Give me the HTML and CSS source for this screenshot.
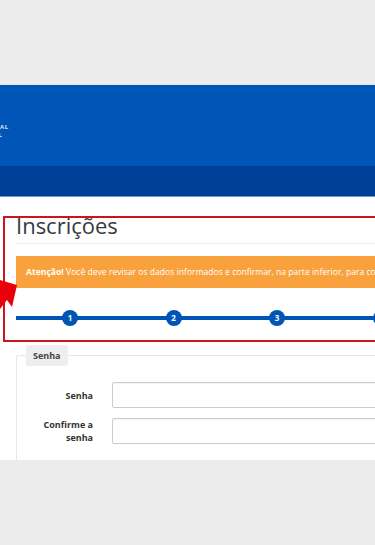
FILE: index.html
```html
<!DOCTYPE html>
<html lang="pt-BR">
<head>
	<meta charset="UTF-8">
	<title>Inscrições</title>
	<link rel="stylesheet" href="styles.css">
</head>
<body>
	<div class="top_gap"></div>
	<div class="masthead">
		<div class="logo">
			<p class="logo_l1">NACIONAL</p>
			<p class="logo_l2">BRASIL</p>
		</div>
	</div>
	<div class="menu"></div>
	<div class="content">
		<h3 class="title">Inscrições</h3>
		<div class="alert"><b>Atenção!</b> Você deve revisar os dados informados e confirmar, na parte inferior, para concluir a sua inscrição.</div>
		<ul class="steps">
			<li>1</li>
			<li>2</li>
			<li>3</li>
			<li>4</li>
		</ul>
		<fieldset class="box">
			<legend>Senha</legend>
			<div class="row">
				<label>Senha</label>
				<input type="password">
			</div>
			<div class="row">
				<label>Confirme a<br>senha</label>
				<input type="password">
			</div>
		</fieldset>
		<!-- marcação em vermelho sobre a tela -->
		<div class="mark"></div>
		<svg class="arrow" width="20" height="40" viewBox="0 0 20 40"><polygon points="0,3 17,8 12,30 7,23 0,32" fill="#e8000b"/></svg>
	</div>
	<div class="bottom_gap"></div>
</body>
</html>
```

FILE: styles.css
```css
body,h3,p,ul,li{padding: 0;margin: 0;}
li{list-style: none;}
body{width: 375px;overflow: hidden;font-family: "Open Sans","Noto Sans",sans-serif;background: #ececec;}

.top_gap{height: 84px;background: #ececec;border-bottom: 1px solid #dfe6ef;}
.masthead{height: 81px;background: #0055b8;display: flex;align-items: center;}
.logo{margin-left: -28px;margin-top: 10px;color: #dbe6f5;font-size: 6px;font-weight: bold;line-height: 8px;letter-spacing: 0.6px;}
.logo_l2{padding-left: 6px;}
.menu{height: 30px;background: #003f96;border-bottom: 1px solid #6f9bd0;}

.content{height: 263px;background: #fff;overflow: hidden;padding-left: 16px;position: relative;}
.title{font-size: 22px;font-weight: normal;color: #3a3a3a;line-height: 24px;padding-top: 16px;padding-bottom: 6px;border-bottom: 1px solid #eee;width: 500px;}
.alert{margin-top: 12px;width: 500px;height: 32px;line-height: 33px;background: #f8a13d;color: #fff;font-size: 8.6px;padding-left: 10px;white-space: nowrap;overflow: hidden;}
.alert b{font-weight: bold;}

.steps{margin-top: 22px;width: 500px;height: 16px;display: flex;gap: 87.5px;padding-left: 46px;background: linear-gradient(#0055b4,#0055b4) left center/100% 4px no-repeat;}
.steps li{width: 16px;height: 16px;border-radius: 50%;background: #0055b4;color: #fff;font-size: 8px;font-weight: bold;text-align: center;line-height: 16px;flex: none;}

.box{margin: 19px 0 0;padding: 0 0 20px 9px;border: 1px solid #e6e6e6;border-radius: 2px;width: 500px;}
.box legend{background: #eee;color: #444;font-size: 9px;font-weight: bold;padding: 0 7px;height: 21px;line-height: 21px;border-radius: 2px;}
.row{display: flex;align-items: center;gap: 19px;margin-top: 10px;}
.row:first-of-type{margin-top: 16px;}
.row label{width: 67px;text-align: right;font-size: 9px;font-weight: bold;color: #333;line-height: 13px;}
.row input{width: 300px;height: 26px;box-sizing: border-box;border: 1px solid #ccc;border-radius: 2px;box-shadow: inset 0 1px 1px rgba(0,0,0,0.05);}

.mark{position: absolute;left: 3px;top: 19px;width: 420px;height: 122px;border: 2px solid #c9161d;}
.arrow{position: absolute;left: 0;top: 80px;}

.bottom_gap{height: 85px;background: #ececec;}
```
